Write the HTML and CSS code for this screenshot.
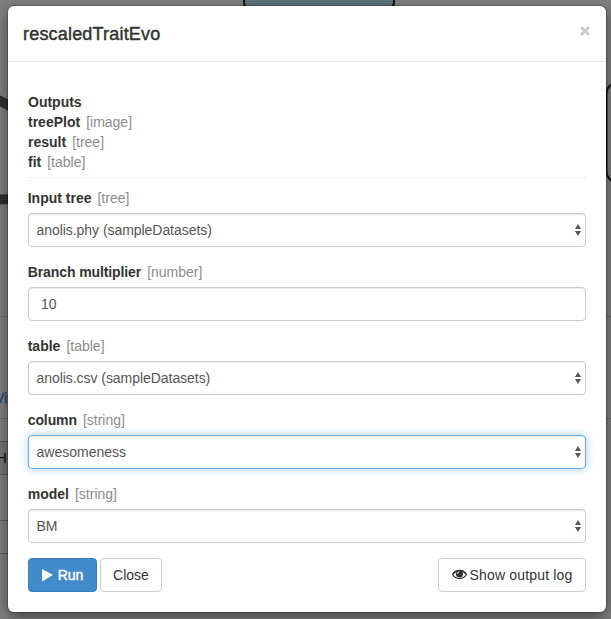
FILE: index.html
```html
<!DOCTYPE html>
<html lang="en">
<head>
<meta charset="utf-8">
<title>rescaledTraitEvo</title>
<link rel="stylesheet" href="styles.css">
</head>
<body>
<svg class="canvas" width="611" height="619" viewBox="0 0 611 619" aria-hidden="true">
  <rect x="244" y="-40" width="150" height="52" rx="10" fill="#5c747d" stroke="#111" stroke-width="2"/>
  <path d="M-2 100L14 108M-2 199.500L12 199" stroke="#303030" stroke-width="10"/>
  <rect x="606.500" y="82" width="60" height="101" rx="12" fill="none" stroke="#111" stroke-width="2"/>
  <path d="M0 316.500H611M0 418.500H611" stroke="#696969"/>
  <rect x="0" y="442" width="10" height="32" fill="#777"/>
  <path d="M0 441.500H10M0 474.500H10M0 520.500H10M0 553.500H10" stroke="#5c5c5c"/>
  <text x="-5" y="403" class="scene-link">Vis</text>
  <text x="-4" y="463" class="scene-text">H</text>
</svg>
<div class="modal">
  <header class="modal-header">
    <h4 class="title">rescaledTraitEvo</h4>
    <button class="dismiss" aria-label="Close"><svg width="12" height="12" viewBox="0 0 12 12"><path d="M2 2L10 10M10 2L2 10" stroke="#ccc" stroke-width="3"/></svg></button>
  </header>
  <div class="modal-body">
    <section class="outputs">
      <div><b>Outputs</b></div>
      <div><b>treePlot</b><span class="type">[image]</span></div>
      <div><b>result</b><span class="type">[tree]</span></div>
      <div><b>fit</b><span class="type">[table]</span></div>
    </section>
    <div class="field">
      <div class="label"><b>Input tree</b><span class="type">[tree]</span></div>
      <div class="control"><span class="dataset">anolis.phy (sampleDatasets)</span><svg class="arrows" width="6" height="12" viewBox="0 0 6 12"><path d="M3 0L6 5H0ZM0 7H6L3 12Z"/></svg></div>
    </div>
    <div class="field">
      <div class="label"><b class="tight">Branch multiplier</b><span class="type">[number]</span></div>
      <div class="control input"><span>10</span></div>
    </div>
    <div class="field">
      <div class="label"><b>table</b><span class="type">[table]</span></div>
      <div class="control"><span class="dataset">anolis.csv (sampleDatasets)</span><svg class="arrows" width="6" height="12" viewBox="0 0 6 12"><path d="M3 0L6 5H0ZM0 7H6L3 12Z"/></svg></div>
    </div>
    <div class="field">
      <div class="label"><b class="tight">column</b><span class="type">[string]</span></div>
      <div class="control focused"><span>awesomeness</span><svg class="arrows" width="6" height="12" viewBox="0 0 6 12"><path d="M3 0L6 5H0ZM0 7H6L3 12Z"/></svg></div>
    </div>
    <div class="field">
      <div class="label"><b>model</b><span class="type">[string]</span></div>
      <div class="control"><span>BM</span><svg class="arrows" width="6" height="12" viewBox="0 0 6 12"><path d="M3 0L6 5H0ZM0 7H6L3 12Z"/></svg></div>
    </div>
    <footer class="actions">
      <button class="btn primary"><svg width="11" height="13" viewBox="0 0 11 13"><path d="M0 0L11 6L0 12.500Z" fill="#fff"/></svg><span>Run</span></button>
      <button class="btn close"><span>Close</span></button>
      <button class="btn log"><svg width="15" height="12" viewBox="0 0 15 12"><path d="M.6 5.500C3.700.1 11.300.1 14.400 5.500C11.300 10.900 3.700 10.900.6 5.500Z" fill="#fff" stroke="#333" stroke-width="1.200"/><path d="M1 5C4 .6 11 .6 14 5" fill="none" stroke="#333" stroke-width="1.500"/><circle cx="7.500" cy="4.900" r="3.500" fill="#333"/><path d="M5.500 4.700Q5.700 3.100 7.200 2.900" fill="none" stroke="#fff" stroke-width="1"/></svg><span>Show output log</span></button>
    </footer>
  </div>
</div>
</body>
</html>
```
FILE: styles.css
```css
* { box-sizing: border-box; }
body {
  margin: 0;
  width: 611px;
  height: 619px;
  padding: 6px 5px 7px 8px;
  overflow: hidden;
  background: #808080;
  color: #333;
  font: 14px/20px "Liberation Sans", Arial, sans-serif;
}
.canvas { position: absolute; inset: 0; }
.scene-link { font-size: 14px; fill: #214478; stroke: #214478; stroke-width: .3px; }
.scene-text { font-size: 15px; fill: #111; }
.modal {
  position: relative;
  height: 606px;
  background: #fff;
  border-radius: 6px;
  box-shadow: 0 0 0 1px rgba(0, 0, 0, .2), 0 5px 15px rgba(0, 0, 0, .5);
}
.modal-header {
  display: flex;
  justify-content: space-between;
  height: 56px;
  padding: 16px 15px 14px;
  border-bottom: 1px solid #e5e5e5;
}
.title {
  margin: 0;
  font-size: 18px;
  line-height: 25px;
  font-weight: 400;
  letter-spacing: .19px;
  -webkit-text-stroke: .45px #333;
}
.dismiss { height: 12px; margin: 3px 0 0; padding: 0; border: 0; background: none; }
.dismiss svg, .arrows, .btn svg { display: block; flex: none; }
.modal-body { padding: 30px 20px 20px; }
.outputs { height: 86px; border-bottom: 1px solid #eee; }
.tight { letter-spacing: -.1px; }
.type { margin-left: 6px; color: #8c8c8c; }
.field { padding-top: 10px; margin-bottom: 5px; }
.label { margin-left: -.3px; }
.control {
  display: flex;
  align-items: center;
  justify-content: space-between;
  height: 34px;
  margin-top: 5px;
  padding: 0 4px 0 7.5px;
  border: 1px solid #ccc;
  border-radius: 4px;
  color: #555;
  box-shadow: inset 0 1px 1px rgba(0, 0, 0, .075);
}
.dataset { letter-spacing: -.05px; }
.input { padding-left: 12px; }
.focused {
  border-color: #66afe9;
  box-shadow: inset 0 1px 1px rgba(0, 0, 0, .075), 0 0 8px rgba(102, 175, 233, .6);
}
.arrows { fill: #555; }
.actions { display: flex; gap: 3px; padding-top: 10px; }
.btn {
  display: flex;
  align-items: center;
  justify-content: center;
  height: 34px;
  padding: 0;
  border: 1px solid #ccc;
  border-radius: 4px;
  background: #fff;
  color: #333;
  font: inherit;
  white-space: nowrap;
}
.primary { width: 69px; gap: 5px; border-color: #357ebd; background: #428bca; color: #fff; -webkit-text-stroke: .4px #fff; }
.close { width: 62px; }
.log { width: 148px; margin-left: auto; gap: 3px; letter-spacing: .16px; }
```
